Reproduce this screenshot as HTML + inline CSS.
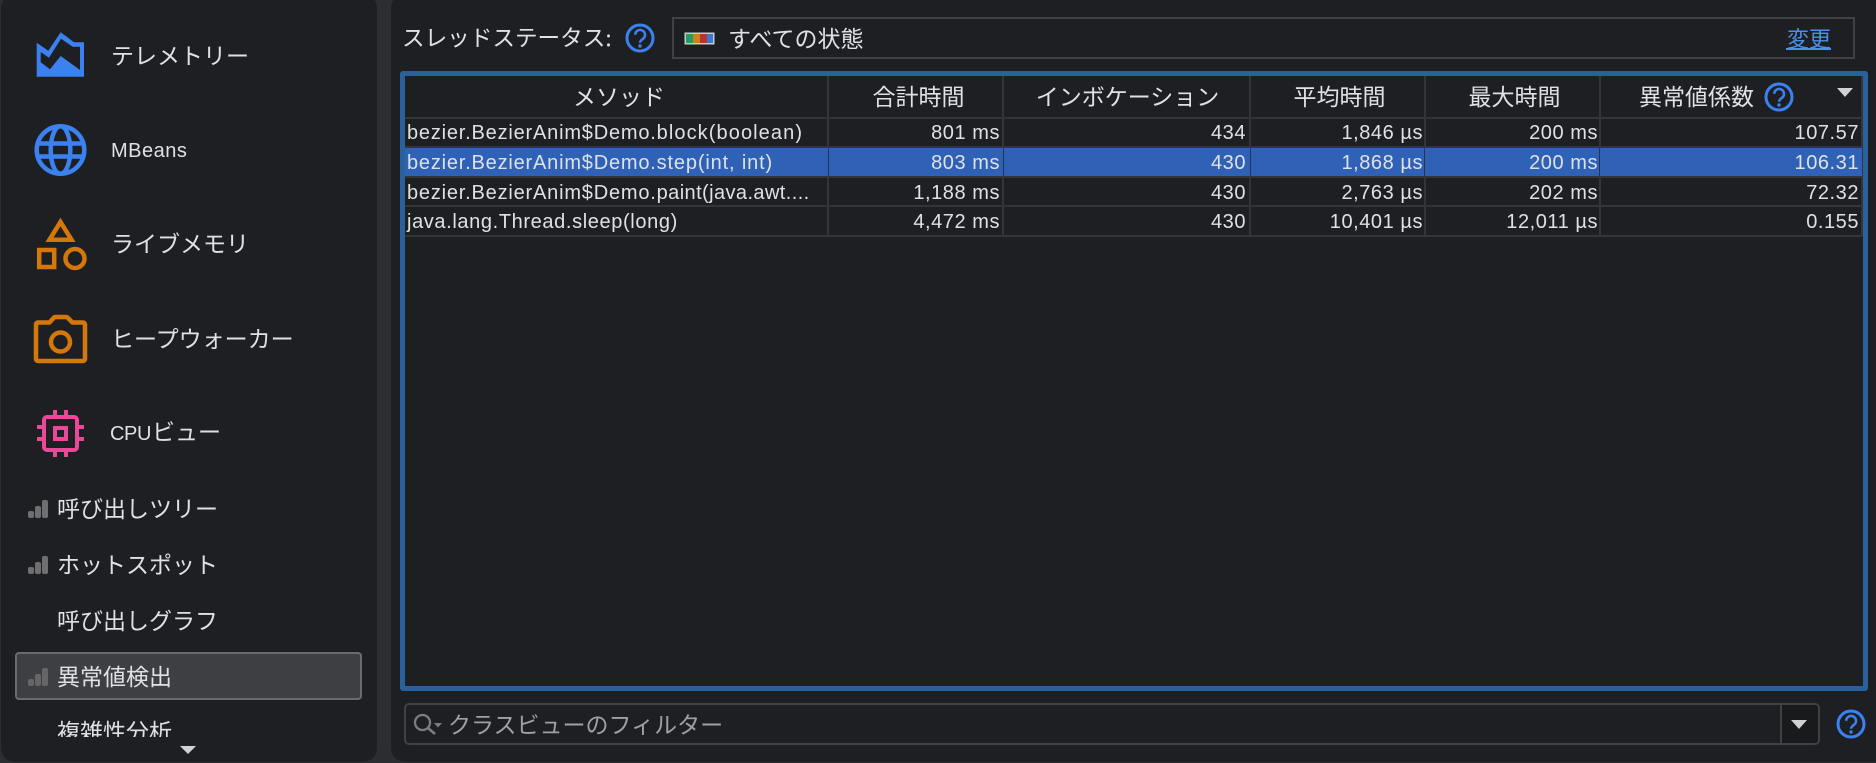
<!DOCTYPE html>
<html lang="ja"><head><meta charset="utf-8">
<style>
*{box-sizing:border-box}
html,body{margin:0;padding:0;width:1876px;height:763px;overflow:hidden;background:#2b2d30}
body{position:relative;font-family:"Liberation Sans","Noto Sans CJK JP",sans-serif;color:#dfe1e5}
.a{position:absolute}
.t{position:absolute;white-space:nowrap;height:30px;line-height:30px}
.j{font-family:"Noto Sans CJK JP",sans-serif;font-size:23px}
.c{font-size:20px;letter-spacing:.55px;text-align:right}
.m{font-size:20px;left:407px}
.p{letter-spacing:.8px}
.h{font-family:"Noto Sans CJK JP",sans-serif;font-size:23px;text-align:center;top:80px;color:#dfe1e5}
.vs{position:absolute;width:2px;background:#333539;top:76px;height:160px}
.hs{position:absolute;height:2px;background:#333539;left:405px;width:1457px}
.bar{position:absolute;background:#6f6f6f;border-radius:2px;width:6px}
</style></head><body>
<div class="a" style="left:1px;top:-6px;width:376px;height:768px;background:#1e1f22;border-radius:14px"></div>
<div class="a" style="left:391px;top:-6px;width:1500px;height:768px;background:#1e1f22;border-radius:14px"></div>

<svg class="a" style="left:0;top:0" width="380" height="763">
<polygon points="36.7,42.7 48.3,50.7 60.7,32.3 74,42.3 84,42.3 84,76.7 36.7,76.7" fill="#3b82f0"/>
<polygon points="40.7,52 49,57.7 61,38.8 72.700,46.700 80,46.700 80,70 60.700,56 50,69.300 40.700,62.300" fill="#1e1f22"/>
<g fill="none" stroke="#3b82f0" stroke-width="4.500"><circle cx="60.5" cy="150" r="23.800"/><ellipse cx="60.5" cy="150" rx="9.800" ry="23.800"/><path d="M37 143.500H84M37 156.500H84"/></g>
<g fill="none" stroke="#d4780a" stroke-width="4.500"><polygon points="60.500,222 49.500,239.700 71.500,239.700"/><rect x="39.200" y="250" width="15" height="17"/><circle cx="75" cy="258.500" r="9.500"/>
<path d="M38 322.500H49.500L54 317.500Q55 317 56 317H65.500Q67 317 67.500 317.500L72.500 322.500H83A2 2 0 0 1 85 324.500V359A2 2 0 0 1 83 361H38A2 2 0 0 1 36 359V324.500A2 2 0 0 1 38 322.500Z" stroke-linejoin="round"/><circle cx="60.500" cy="342" r="9.500"/></g>
<g fill="none" stroke="#ec4899" stroke-width="4"><rect x="44" y="417" width="33" height="33" rx="3"/><rect x="55" y="428" width="11" height="11"/><path d="M55 410V415M66 410V415M55 452V457M66 452V457M37 427H42M37 439H42M79 427H84M79 439H84"/></g>
</svg>
<div class="t j" style="left:111px;top:39px">テレメトリー</div>
<div class="t" style="left:111px;top:136px;font-size:20px;letter-spacing:.5px">MBeans</div>
<div class="t j" style="left:111px;top:227px">ライブメモリ</div>
<div class="t j" style="left:111px;top:322px">ヒープウォーカー</div>
<div class="t" style="left:110px;top:415px;font-size:20px;letter-spacing:-.4px"><span>CPU</span><span class="j" style="margin-left:1px;letter-spacing:0">ビュー</span></div>

<div class="bar" style="left:28px;top:511px;height:7px"></div><div class="bar" style="left:35px;top:506px;height:12px"></div><div class="bar" style="left:42px;top:500px;height:18px"></div>
<div class="t j" style="left:57px;top:492px">呼び出しツリー</div>
<div class="bar" style="left:28px;top:567px;height:7px"></div><div class="bar" style="left:35px;top:562px;height:12px"></div><div class="bar" style="left:42px;top:556px;height:18px"></div>
<div class="t j" style="left:57px;top:548px">ホットスポット</div>
<div class="t j" style="left:57px;top:604px">呼び出しグラフ</div>
<div class="a" style="left:15px;top:652px;width:347px;height:48px;background:#3e3f42;border:2px solid #6a6c70;border-radius:4px"></div>
<div class="bar" style="left:28px;top:679px;height:7px;background:#666"></div><div class="bar" style="left:35px;top:674px;height:12px;background:#666"></div><div class="bar" style="left:42px;top:668px;height:18px;background:#666"></div>
<div class="t j" style="left:57px;top:660px">異常値検出</div>
<div class="a" style="left:0;top:715px;width:377px;height:22px;overflow:hidden"><div class="t j" style="left:57px;top:0">複雑性分析</div></div>
<svg class="a" style="left:178px;top:744px" width="20" height="12"><polygon points="2,2 18,2 10,10" fill="#cfd1d4"/></svg>

<div class="t j" style="left:402px;top:22px;font-size:22.600px">スレッドステータス:</div>
<svg class="a" style="left:624px;top:22px" width="32" height="32"><circle cx="16" cy="16" r="13" fill="none" stroke="#3b82f0" stroke-width="3"/><path d="M11.200 12.800a4.900 4.900 0 1 1 7.800 4c-2 1.400-3 2.300-3 4" fill="none" stroke="#3b82f0" stroke-width="2.500"/><circle cx="16" cy="24" r="1.700" fill="#3b82f0"/></svg>
<div class="a" style="left:672px;top:17px;width:1183px;height:42px;border:2px solid #3f4145"></div>
<svg class="a" style="left:684px;top:32px" width="31" height="13"><rect x="0.500" y="0.500" width="30" height="12" fill="#c8cacc"/><rect x="2" y="2" width="7" height="9" fill="#1f9d63"/><rect x="9" y="2" width="7" height="9" fill="#d08410"/><rect x="16" y="2" width="7" height="9" fill="#c0302c"/><rect x="23" y="2" width="6" height="9" fill="#3a78d8"/></svg>
<div class="t j" style="left:728px;top:22px">すべての状態</div>
<div class="t j" style="left:1787px;top:23px;font-size:22px;color:#4a90ea">変更</div>
<div class="a" style="left:1786px;top:48px;width:45px;height:2px;background:#4a90ea"></div>

<div class="a" style="left:400px;top:71px;width:1468px;height:620px;border:5px solid #28619c;border-radius:3px"></div>
<div class="hs" style="top:117px"></div>
<div class="hs" style="top:146px"></div>
<div class="hs" style="top:176px"></div>
<div class="hs" style="top:205px"></div>
<div class="hs" style="top:235px"></div>
<div class="vs" style="left:827px"></div><div class="vs" style="left:1002px"></div><div class="vs" style="left:1249px"></div><div class="vs" style="left:1424px"></div><div class="vs" style="left:1599px"></div><div class="vs" style="left:1861px"></div>
<div class="a" style="left:405px;top:148px;width:1457px;height:28px;background:#2f62b6"></div>
<div class="a" style="left:828px;top:148px;width:1px;height:28px;background:#26344d"></div><div class="a" style="left:1003px;top:148px;width:1px;height:28px;background:#26344d"></div><div class="a" style="left:1250px;top:148px;width:1px;height:28px;background:#26344d"></div><div class="a" style="left:1424px;top:148px;width:1px;height:28px;background:#26344d"></div><div class="a" style="left:1599px;top:148px;width:1px;height:28px;background:#26344d"></div>

<div class="t h" style="left:408px;width:422px">メソッド</div>
<div class="t h" style="left:832px;width:173px">合計時間</div>
<div class="t h" style="left:1005px;width:245px">インボケーション</div>
<div class="t h" style="left:1253px;width:173px">平均時間</div>
<div class="t h" style="left:1428px;width:173px">最大時間</div>
<div class="t h" style="left:1639px;width:115px">異常値係数</div>
<svg class="a" style="left:1763px;top:81px" width="32" height="32"><circle cx="16" cy="16" r="13" fill="none" stroke="#3b82f0" stroke-width="3"/><path d="M11.200 12.800a4.900 4.900 0 1 1 7.800 4c-2 1.400-3 2.300-3 4" fill="none" stroke="#3b82f0" stroke-width="2.500"/><circle cx="16" cy="24" r="1.700" fill="#3b82f0"/></svg>
<svg class="a" style="left:1836px;top:87px" width="18" height="12"><polygon points="1,1 17,1 9,10" fill="#cfd1d4"/></svg>

<div class="t m" style="top:118px"><span class="p">bezier.BezierAnim$Demo.</span><span style="letter-spacing:1.09px">block(boolean)</span></div>
<div class="t m" style="top:148px"><span class="p">bezier.BezierAnim$Demo.</span><span style="letter-spacing:.85px">step(int, int)</span></div>
<div class="t m" style="top:178px"><span class="p">bezier.BezierAnim$Demo.</span><span style="letter-spacing:.41px">paint(java.awt....</span></div>
<div class="t m" style="top:207px;letter-spacing:.62px">java.lang.Thread.sleep(long)</div>

<div class="t c" style="right:876px;top:118px">801 ms</div><div class="t c" style="right:630px;top:118px">434</div><div class="t c" style="right:453px;top:118px">1,846 µs</div><div class="t c" style="right:278px;top:118px">200 ms</div><div class="t c" style="right:17px;top:118px">107.57</div>
<div class="t c" style="right:876px;top:148px">803 ms</div><div class="t c" style="right:630px;top:148px">430</div><div class="t c" style="right:453px;top:148px">1,868 µs</div><div class="t c" style="right:278px;top:148px">200 ms</div><div class="t c" style="right:17px;top:148px">106.31</div>
<div class="t c" style="right:876px;top:178px">1,188 ms</div><div class="t c" style="right:630px;top:178px">430</div><div class="t c" style="right:453px;top:178px">2,763 µs</div><div class="t c" style="right:278px;top:178px">202 ms</div><div class="t c" style="right:17px;top:178px">72.32</div>
<div class="t c" style="right:876px;top:207px">4,472 ms</div><div class="t c" style="right:630px;top:207px">430</div><div class="t c" style="right:453px;top:207px">10,401 µs</div><div class="t c" style="right:278px;top:207px">12,011 µs</div><div class="t c" style="right:17px;top:207px">0.155</div>

<div class="a" style="left:404px;top:703px;width:1416px;height:42px;border:2px solid #3f4145;border-radius:5px;overflow:hidden"><div class="a" style="right:0;top:0;width:38px;height:38px;background:#191a1c;border-left:2px solid #3f4145"></div></div>
<svg class="a" style="left:412px;top:712px" width="34" height="26"><circle cx="10.500" cy="10.500" r="7.500" fill="none" stroke="#7a7d82" stroke-width="2.300"/><path d="M16 16L23 22" stroke="#7a7d82" stroke-width="2.600"/><polygon points="22,11 30,11 26,15.500" fill="#7a7d82"/></svg>
<div class="t j" style="left:448px;top:708px;color:#9da0a6">クラスビューのフィルター</div>
<svg class="a" style="left:1789px;top:718px" width="20" height="14"><polygon points="2,2 18,2 10,11" fill="#cfd1d4"/></svg>
<svg class="a" style="left:1835px;top:708px" width="32" height="32"><circle cx="16" cy="16" r="13" fill="none" stroke="#3b82f0" stroke-width="3"/><path d="M11.200 12.800a4.900 4.900 0 1 1 7.800 4c-2 1.400-3 2.300-3 4" fill="none" stroke="#3b82f0" stroke-width="2.500"/><circle cx="16" cy="24" r="1.700" fill="#3b82f0"/></svg>
</body></html>
